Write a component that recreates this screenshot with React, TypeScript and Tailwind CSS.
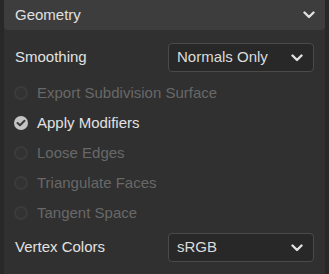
import React from 'react';

const font = { fontFamily: '"Liberation Sans", Arial, sans-serif' };

function Chevron({ className = '' }: { className?: string }) {
  return (
    <svg width="12" height="8" viewBox="0 0 12 8" className={className}>
      <path d="M1.5 1.5 L6 6 L10.5 1.5" fill="none" stroke="#e0e0e0" strokeWidth="2.4" strokeLinecap="round" strokeLinejoin="round" />
    </svg>
  );
}

function Select({ value }: { value: string }) {
  return (
    <div className="w-[146px] h-[29px] rounded-[4px] border border-[#4a4a4a] bg-[#282828] flex items-center justify-between pl-[8px] pr-[10px]">
      <span className="text-[15px] text-[#dcdcdc]">{value}</span>
      <Chevron />
    </div>
  );
}

function Radio({ label, checked = false }: { label: string; checked?: boolean }) {
  return (
    <div className="h-[30px] flex items-center pl-[10px]">
      {checked ? (
        <div className="w-[14px] h-[14px] rounded-full bg-[#c4c4c4] flex items-center justify-center">
          <svg width="10" height="8" viewBox="0 0 10 8">
            <path d="M1.5 4 L4 6.3 L8.5 1.8" fill="none" stroke="#3a3a3a" strokeWidth="2" strokeLinecap="round" strokeLinejoin="round" />
          </svg>
        </div>
      ) : (
        <div className="w-[14px] h-[14px] rounded-full bg-[#323232] border-2 border-[#3b3b3b]" />
      )}
      <span className={`ml-[9px] text-[15px] ${checked ? 'text-[#e2e2e2]' : 'text-[#686868]'}`}>{label}</span>
    </div>
  );
}

export default function App() {
  return (
    <div className="w-[329px] h-[274px] bg-[#282828] px-[4px] overflow-hidden" style={font}>
      <div className="h-[290px] bg-[#303030] rounded-[4px] -mt-[4px]">
        <div className="h-[34px] pt-[4px] bg-[#3d3d3d] rounded-[4px] flex items-center justify-between pl-[11px] pr-[10px]">
          <span className="text-[15px] text-[#e0e0e0]">Geometry</span>
          <Chevron />
        </div>
        <div className="pt-[13px] pr-[11px]">
          <div className="h-[29px] flex items-center justify-between pl-[11px]">
            <span className="text-[15px] text-[#e2e2e2]">Smoothing</span>
            <Select value="Normals Only" />
          </div>
          <div className="mt-[6px]">
            <Radio label="Export Subdivision Surface" />
            <Radio label="Apply Modifiers" checked />
            <Radio label="Loose Edges" />
            <Radio label="Triangulate Faces" />
            <Radio label="Tangent Space" />
          </div>
          <div className="mt-[5px] h-[29px] flex items-center justify-between pl-[11px]">
            <span className="text-[15px] text-[#e2e2e2]">Vertex Colors</span>
            <Select value="sRGB" />
          </div>
        </div>
      </div>
    </div>
  );
}
